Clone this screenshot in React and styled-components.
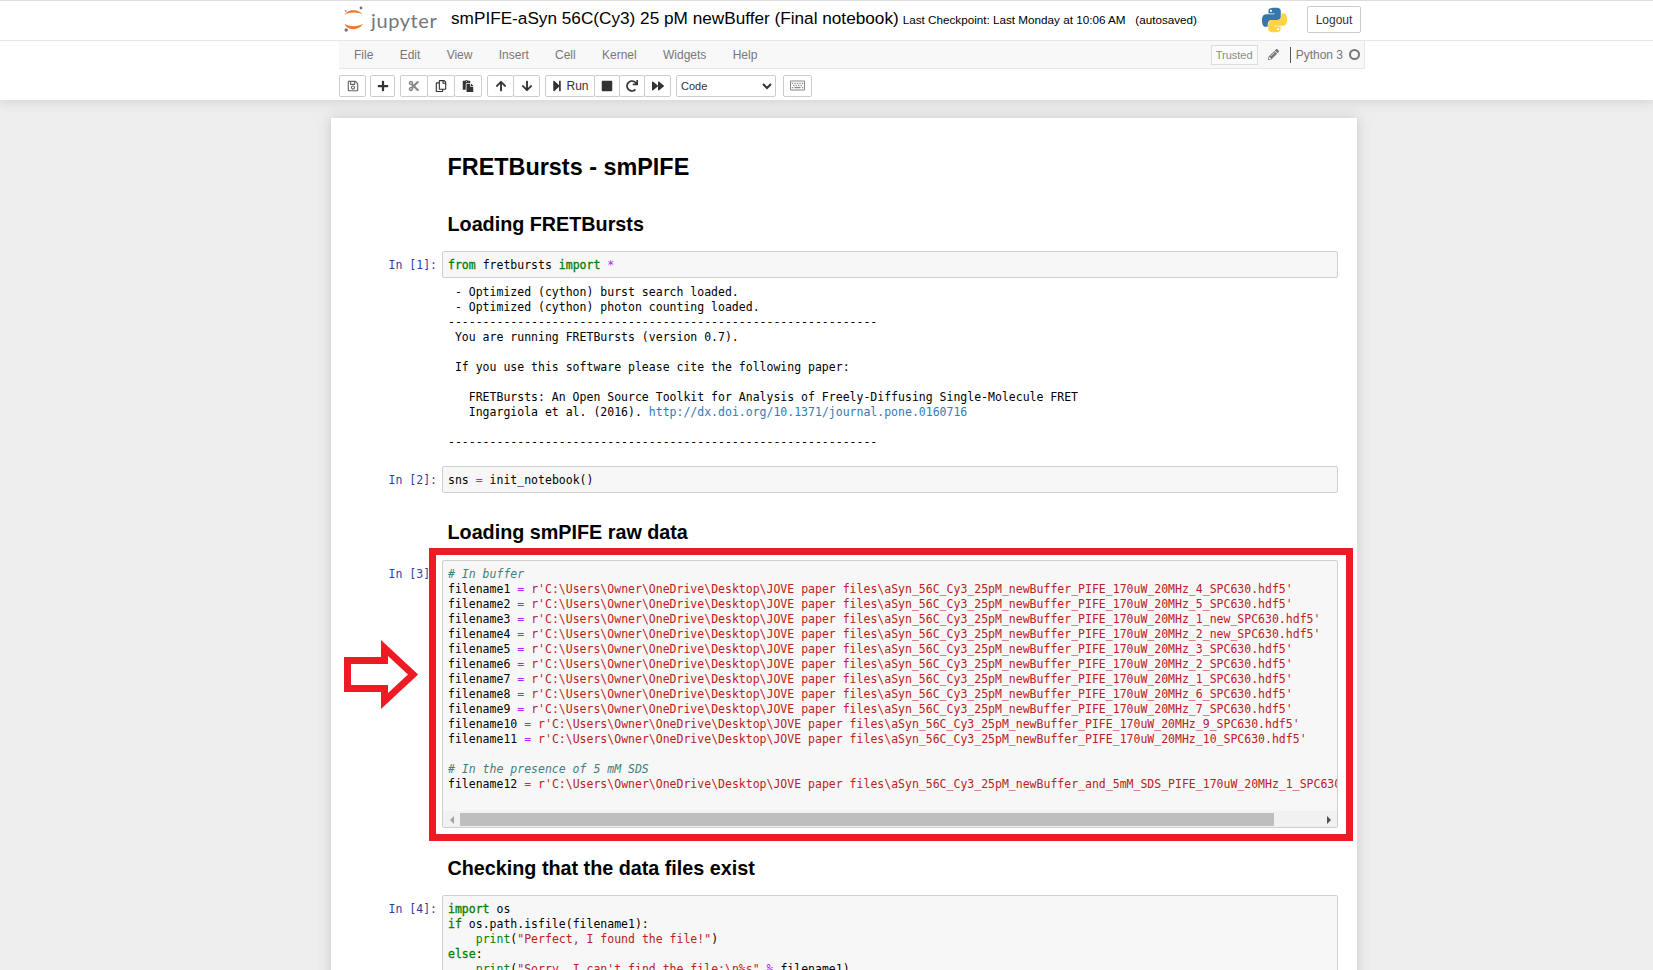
import React from 'react';
import styled, { createGlobalStyle } from 'styled-components';
import {
  FaRegSave,
  FaPlus,
  FaCut,
  FaRegCopy,
  FaPaste,
  FaArrowUp,
  FaArrowDown,
  FaStepForward,
  FaStop,
  FaRedo,
  FaForward,
  FaRegKeyboard,
  FaPencilAlt,
} from 'react-icons/fa';

const GlobalStyle = createGlobalStyle`
  html, body {
    margin: 0;
    padding: 0;
    height: 970px;
    overflow: hidden;
    background: #eeeeee;
    font-family: "Liberation Sans", Arial, sans-serif;
    font-size: 13px;
    color: #000;
  }
`;

const MONO = '"DejaVu Sans Mono", "Liberation Mono", monospace';

const Screen = styled.div`
  height: 970px;
  overflow: hidden;
  background: #eeeeee;
`;

const TopPanel = styled.div`
  height: 100px;
  background: #fff;
  border-top: 1px solid #dddddd;
  box-sizing: border-box;
  box-shadow: 0 0 12px 1px rgba(87, 87, 87, 0.2);
`;

const HeaderBand = styled.header`
  height: 39px;
  border-bottom: 1px solid #e7e7e7;
`;

const HeaderInner = styled.div`
  display: flex;
  align-items: center;
  width: 1026px;
  height: 39px;
  margin-left: 339px;
  padding: 0 4px 2px 5px;
  box-sizing: border-box;
`;

const Logo = styled.div`
  display: flex;
  align-items: center;
  width: 107px;
  flex: none;
`;

const LogoWord = styled.span`
  margin-left: 7px;
  font-family: Lato, "Open Sans", sans-serif;
  font-size: 20px;
  line-height: 26px;
  letter-spacing: 0.6px;
  color: #767677;
`;

const Title = styled.span`
  padding-bottom: 2px;
  font-size: 17.2px;
  white-space: nowrap;
`;

const Checkpoint = styled.span`
  margin-left: 4px;
  font-size: 11.7px;
  white-space: pre;
`;

const PythonLogo = styled.svg`
  width: 25px;
  height: 26px;
  margin-left: auto;
  flex: none;
`;

const LogoutButton = styled.button`
  width: 54px;
  height: 27px;
  margin-left: 20px;
  padding: 0;
  background: #fff;
  border: 1px solid #cccccc;
  border-radius: 2px;
  font: 12px "Liberation Sans", Arial, sans-serif;
  color: #333;
`;

const MenuBar = styled.nav`
  display: flex;
  align-items: center;
  width: 1026px;
  height: 28px;
  margin-left: 339px;
  padding-left: 15px;
  box-sizing: border-box;
  background: #f8f8f8;
  border: 1px solid #e7e7e7;
  border-top: 0;
  border-left: 0;
  gap: 26.3px;
  font-size: 12px;
  color: #777777;
`;

const MenuStatus = styled.div`
  display: flex;
  align-items: center;
  margin-left: auto;
  padding-right: 4px;
`;

const TrustedBadge = styled.span`
  display: flex;
  align-items: center;
  justify-content: center;
  width: 47px;
  height: 20px;
  box-sizing: border-box;
  border: 1px solid #dddddd;
  background: #fbfbfb;
  font-size: 11px;
  color: #8a8a8a;
`;

const PencilSlot = styled.span`
  display: flex;
  width: 32px;
  justify-content: center;
  font-size: 11px;
  color: #777777;
`;

const KernelName = styled.span`
  border-left: 1px solid #555555;
  padding-left: 5px;
  line-height: 16px;
`;

const KernelDot = styled.span`
  width: 11px;
  height: 11px;
  margin-left: 6px;
  box-sizing: border-box;
  border: 2px solid #777777;
  border-radius: 50%;
`;

const Toolbar = styled.div`
  display: flex;
  align-items: flex-start;
  gap: 5px;
  height: 31px;
  margin-left: 339px;
  padding-top: 6px;
  box-sizing: border-box;
`;

const BtnGroup = styled.div`
  display: flex;
`;

const ToolButton = styled.button`
  display: flex;
  align-items: center;
  justify-content: center;
  gap: 3px;
  width: ${(p) => p.$w}px;
  height: 22px;
  margin: 0 0 0 ${(p) => p.$gap || -1}px;
  padding: 0 0 1px;
  background: #fff;
  border: 1px solid #cccccc;
  border-radius: 2px;
  font: 12px "Liberation Sans", Arial, sans-serif;
  color: ${(p) => p.$tone || '#333'};

  &:first-child {
    margin-left: 0;
  }

  svg {
    font-size: ${(p) => p.$icon || 12}px;
  }
`;

const CellTypeSelect = styled.select`
  width: 100px;
  height: 22px;
  padding: 0;
  background: #fff;
  border: 1px solid #cccccc;
  border-radius: 2px;
  font: 11px "Liberation Sans", Arial, sans-serif;
  color: #333;
`;

const Page = styled.main`
  width: 1026px;
  height: 900px;
  margin: 18px 0 0 331px;
  box-sizing: border-box;
  padding: 36px 19px 0 111px;
  background: #fff;
  box-shadow: 0 0 12px 1px rgba(87, 87, 87, 0.2);
`;

const H1 = styled.h1`
  margin: 0 0 0 5.5px;
  font-size: 23.4px;
  line-height: 26px;
  font-weight: bold;
`;

const H2 = styled.h2`
  margin: ${(p) => p.$top}px 0 0 5.5px;
  font-size: 19.75px;
  line-height: 22px;
  font-weight: bold;
`;

const Row = styled.section`
  position: relative;
  margin-top: ${(p) => p.$top}px;
`;

const Prompt = styled.div`
  position: absolute;
  right: 100%;
  top: 7px;
  padding-right: 5px;
  font: 11.5px/15px ${MONO};
  color: #303f9f;
  white-space: pre;
`;

const InputArea = styled.div`
  background: #f7f7f7;
  border: 1px solid #cfcfcf;
  border-radius: 2px;
  overflow: hidden;
`;

const Code = styled.pre`
  margin: 0;
  padding: ${(p) => p.$pad || '6px 0 4px 5px'};
  font: 11.5px/15px ${MONO};
  color: #000;
  overflow: hidden;
`;

const OutputText = styled.pre`
  margin: 7px 0 0;
  padding-left: 6px;
  font: 11.5px/15px ${MONO};
  color: #000;
`;

const Kw = styled.span`
  color: #008000;
  -webkit-text-stroke: 0.3px #008000;
`;
const Builtin = styled.span`
  color: #008000;
`;
const Op = styled.span`
  color: #aa22ff;
`;
const Str = styled.span`
  color: #ba2121;
`;
const Comment = styled.span`
  color: #408080;
  font-style: italic;
`;
const Link = styled.a`
  color: #337ab7;
  text-decoration: none;
`;

const ScrollBar = styled.div`
  display: flex;
  align-items: flex-end;
  height: 16px;
  padding-bottom: 1px;
  box-sizing: border-box;
  background: #f1f1f1;
`;

const ScrollArrow = styled.span`
  display: flex;
  align-items: center;
  justify-content: ${(p) => (p.$right ? 'flex-end' : 'center')};
  flex: ${(p) => (p.$right ? 1 : 'none')};
  width: 17px;
  height: 13px;
  padding-right: ${(p) => (p.$right ? 6 : 0)}px;

  &::before {
    content: '';
    border-top: 4px solid transparent;
    border-bottom: 4px solid transparent;
    ${(p) => (p.$right ? 'border-left: 4px solid #505050;' : 'border-right: 4px solid #a3a3a3;')}
  }
`;

const ScrollThumb = styled.span`
  width: 814px;
  height: 13px;
  background: #bebebe;
  flex: none;
`;

const RedFrame = styled.div`
  position: absolute;
  top: -12px;
  left: -13px;
  width: 924px;
  height: 293px;
  box-sizing: border-box;
  border: 7px solid #ed1c24;
  pointer-events: none;
`;

const RedArrow = styled.svg`
  position: absolute;
  top: 79px;
  left: -98px;
  width: 75px;
  height: 72px;
  overflow: visible;
`;

const JupyterMark = () => (
  <svg width="20" height="27" viewBox="0 0 20 27">
    <path d="M0.5 9C3 2.5 15.5 2.5 19 9C15 5.8 4.5 5.8 0.5 9Z" fill="#f37726" />
    <path d="M0.5 17.5C3 25 15.5 25 19 17.5C15 21 4.5 21 0.5 17.5Z" fill="#f37726" />
    <circle cx="17" cy="2" r="1.4" fill="#767677" />
    <circle cx="2.2" cy="24" r="1.7" fill="#767677" />
    <circle cx="1.6" cy="5" r="1" fill="#9e9e9e" />
  </svg>
);

const PY_BLUE =
  'M54.9 0.6C50.3 0.6 45.9 1 42 1.7C30.6 3.7 28.5 7.9 28.5 15.7V26H55.5V29.4H18.4C10.5 29.4 3.6 34.1 1.5 43.2C-1 53.6 -1.1 60.1 1.5 71C3.4 79.1 8 84.9 15.9 84.9H25.2V72.4C25.2 63.4 33 55.5 42.2 55.5H69.2C76.7 55.5 82.7 49.3 82.7 41.8V15.7C82.7 8.3 76.5 2.8 69.2 1.6C64.5 0.8 59.6 0.5 54.9 0.6Z';

const PythonMark = () => (
  <PythonLogo viewBox="0 0 110 110">
    <path d={PY_BLUE} fill="#3776ab" />
    <circle cx="39.5" cy="14.5" r="5" fill="#fff" />
    <g transform="rotate(180 55.1 55)">
      <path d={PY_BLUE} fill="#ffd343" />
      <circle cx="39.5" cy="14.5" r="5" fill="#fff" />
    </g>
  </PythonLogo>
);

const MENU = ['File', 'Edit', 'View', 'Insert', 'Cell', 'Kernel', 'Widgets', 'Help'];

const DIR = "C:\\Users\\Owner\\OneDrive\\Desktop\\JOVE paper files\\";
const BASE = 'aSyn_56C_Cy3_25pM_newBuffer';

const FILES = [
  ['filename1 ', `PIFE_170uW_20MHz_4_SPC630.hdf5'`],
  ['filename2 ', `PIFE_170uW_20MHz_5_SPC630.hdf5'`],
  ['filename3 ', `PIFE_170uW_20MHz_1_new_SPC630.hdf5'`],
  ['filename4 ', `PIFE_170uW_20MHz_2_new_SPC630.hdf5'`],
  ['filename5 ', `PIFE_170uW_20MHz_3_SPC630.hdf5'`],
  ['filename6 ', `PIFE_170uW_20MHz_2_SPC630.hdf5'`],
  ['filename7 ', `PIFE_170uW_20MHz_1_SPC630.hdf5'`],
  ['filename8 ', `PIFE_170uW_20MHz_6_SPC630.hdf5'`],
  ['filename9 ', `PIFE_170uW_20MHz_7_SPC630.hdf5'`],
  ['filename10 ', `PIFE_170uW_20MHz_9_SPC630.hdf5'`],
  ['filename11 ', `PIFE_170uW_20MHz_10_SPC630.hdf5'`],
];

const Assign = ({ name, tail }) => (
  <>
    {name}
    <Op>=</Op> <Str>{`r'${DIR}${BASE}_${tail}`}</Str>
    {'\n'}
  </>
);

const DASHES = '-'.repeat(62);

const App = () => {
  return (
    <Screen>
      <GlobalStyle />
      <TopPanel>
        <HeaderBand>
          <HeaderInner>
            <Logo>
              <JupyterMark />
              <LogoWord>jupyter</LogoWord>
            </Logo>
            <Title>smPIFE-aSyn 56C(Cy3) 25 pM newBuffer (Final notebook)</Title>
            <Checkpoint>Last Checkpoint: Last Monday at 10:06 AM   (autosaved)</Checkpoint>
            <PythonMark />
            <LogoutButton type="button">Logout</LogoutButton>
          </HeaderInner>
        </HeaderBand>
        <MenuBar>
          {MENU.map((item) => (
            <span key={item}>{item}</span>
          ))}
          <MenuStatus>
            <TrustedBadge>Trusted</TrustedBadge>
            <PencilSlot>
              <FaPencilAlt />
            </PencilSlot>
            <KernelName>Python 3</KernelName>
            <KernelDot />
          </MenuStatus>
        </MenuBar>
        <Toolbar>
          <ToolButton $w={27} $tone="#666" type="button">
            <FaRegSave />
          </ToolButton>
          <ToolButton $w={25} type="button">
            <FaPlus />
          </ToolButton>
          <BtnGroup>
            <ToolButton $w={28} $tone="#888" type="button">
              <FaCut />
            </ToolButton>
            <ToolButton $w={28} type="button">
              <FaRegCopy />
            </ToolButton>
            <ToolButton $w={28} type="button">
              <FaPaste />
            </ToolButton>
          </BtnGroup>
          <BtnGroup>
            <ToolButton $w={27} type="button">
              <FaArrowUp />
            </ToolButton>
            <ToolButton $w={27} type="button">
              <FaArrowDown />
            </ToolButton>
          </BtnGroup>
          <BtnGroup>
            <ToolButton $w={50} type="button">
              <FaStepForward />
              Run
            </ToolButton>
            <ToolButton $w={26} type="button">
              <FaStop />
            </ToolButton>
            <ToolButton $w={26} type="button">
              <FaRedo />
            </ToolButton>
            <ToolButton $w={27} type="button">
              <FaForward />
            </ToolButton>
          </BtnGroup>
          <CellTypeSelect defaultValue="Code">
            <option>Code</option>
            <option>Markdown</option>
          </CellTypeSelect>
          <ToolButton $w={29} $gap={2} $icon={15} $tone="#888" type="button">
            <FaRegKeyboard />
          </ToolButton>
        </Toolbar>
      </TopPanel>

      <Page>
        <H1>FRETBursts - smPIFE</H1>
        <H2 $top={33}>Loading FRETBursts</H2>

        <Row $top={16}>
          <Prompt>In [1]:</Prompt>
          <InputArea>
            <Code>
              <Kw>from</Kw> fretbursts <Kw>import</Kw> <Op>*</Op>
            </Code>
          </InputArea>
          <OutputText>
            {` - Optimized (cython) burst search loaded.
 - Optimized (cython) photon counting loaded.
${DASHES}
 You are running FRETBursts (version 0.7).

 If you use this software please cite the following paper:

   FRETBursts: An Open Source Toolkit for Analysis of Freely-Diffusing Single-Molecule FRET
   Ingargiola et al. (2016). `}
            <Link href="#doi">http://dx.doi.org/10.1371/journal.pone.0160716</Link>
            {`

${DASHES}`}
          </OutputText>
        </Row>

        <Row $top={16}>
          <Prompt>In [2]:</Prompt>
          <InputArea>
            <Code>
              sns <Op>=</Op> init_notebook()
            </Code>
          </InputArea>
        </Row>

        <H2 $top={28}>Loading smPIFE raw data</H2>

        <Row $top={17}>
          <Prompt>In [3]:</Prompt>
          <InputArea>
            <Code $pad="6px 0 19px 5px">
              <Comment># In buffer</Comment>
              {'\n'}
              {FILES.map(([name, tail]) => (
                <Assign key={name} name={name} tail={tail} />
              ))}
              {'\n'}
              <Comment># In the presence of 5 mM SDS</Comment>
              {'\n'}
              filename12 <Op>=</Op>{' '}
              <Str>{`r'${DIR}${BASE}_and_5mM_SDS_PIFE_170uW_20MHz_1_SPC630.hdf5'`}</Str>
            </Code>
            <ScrollBar>
              <ScrollArrow />
              <ScrollThumb />
              <ScrollArrow $right />
            </ScrollBar>
          </InputArea>
          <RedFrame />
          <RedArrow viewBox="0 0 75 72">
            <polygon
              points="3.5,21.5 40.5,21.5 40.5,9 69,35.5 40.5,62 40.5,49.5 3.5,49.5"
              fill="none"
              stroke="#ed1c24"
              strokeWidth="7"
            />
          </RedArrow>
        </Row>

        <H2 $top={29}>Checking that the data files exist</H2>

        <Row $top={16}>
          <Prompt>In [4]:</Prompt>
          <InputArea>
            <Code>
              <Kw>import</Kw> os{'\n'}
              <Kw>if</Kw> os.path.isfile(filename1):{'\n'}
              {'    '}
              <Builtin>print</Builtin>(<Str>"Perfect, I found the file!"</Str>){'\n'}
              <Kw>else</Kw>:{'\n'}
              {'    '}
              <Builtin>print</Builtin>(<Str>"Sorry, I can't find the file:\n%s"</Str> <Op>%</Op>{' '}
              filename1)
            </Code>
          </InputArea>
        </Row>
      </Page>
    </Screen>
  );
};

export default App;
